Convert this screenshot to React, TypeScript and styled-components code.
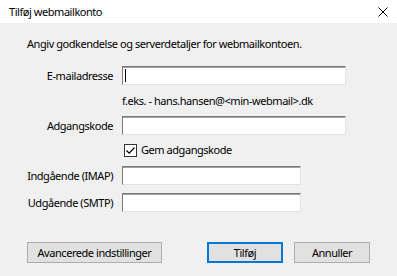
import React from "react";
import styled, { createGlobalStyle } from "styled-components";

const Global = createGlobalStyle`
  html, body { margin: 0; padding: 0; background: #f0f0f0; }
  * { box-sizing: border-box; }
`;

const FONT = `"Noto Sans", "Open Sans", sans-serif`;

const Window = styled.div`
  width: 397px;
  height: 276px;
  background: #f0f0f0;
  font-family: ${FONT};
  font-size: 11px;
  letter-spacing: -0.45px;
  color: #000;
  display: flex;
  flex-direction: column;
  overflow: hidden;
  white-space: nowrap;
`;

const TitleBar = styled.div`
  height: 23px;
  background: #fff;
  display: flex;
  align-items: center;
  justify-content: space-between;
  padding: 0 9px 0 9px;
`;

const CloseIcon = styled.svg`
  width: 10px;
  height: 10px;
`;

const Body = styled.div`
  padding: 13px 0 0 27px;
  display: flex;
  flex-direction: column;
`;

const Intro = styled.div`
  line-height: 16px;
  height: 16px;
`;

const Form = styled.div`
  margin-top: 14px;
  display: grid;
  grid-template-columns: 86px 224px;
  column-gap: 9px;
  align-items: center;
`;

const Label = styled.div`
  text-align: right;
  line-height: 16px;
`;

const Input = styled.div<{ $w: number; $mt: number }>`
  width: ${(p) => p.$w}px;
  height: 19px;
  margin-top: ${(p) => p.$mt}px;
  background: #fff;
  border: 1px solid;
  border-color: #7a7a7a #e3e3e3 #e3e3e3 #7a7a7a;
  box-shadow: inset 0 1px 0 #a0a0a0;
  display: flex;
  align-items: center;
  padding-left: 2px;
`;

const Caret = styled.div`
  width: 1px;
  height: 13px;
  background: #000;
`;

const Cell = styled.div<{ $mt: number }>`
  grid-column: 2;
  margin-top: ${(p) => p.$mt}px;
  line-height: 16px;
  display: flex;
  align-items: center;
`;

const LabelCell = styled(Label)<{ $mt: number }>`
  margin-top: ${(p) => p.$mt}px;
`;

const Check = styled.div`
  width: 13px;
  height: 13px;
  border: 1px solid #333;
  background: #fff;
  margin-left: 2px;
  margin-right: 4px;
  display: flex;
  align-items: center;
  justify-content: center;
`;

const Buttons = styled.div`
  margin-top: 30px;
  display: flex;
`;

const Button = styled.div<{ $w: number; $default?: boolean; $ml?: number }>`
  width: ${(p) => p.$w}px;
  height: 21px;
  margin-left: ${(p) => p.$ml ?? 0}px;
  background: #e1e1e1;
  border: 1px solid ${(p) => (p.$default ? "#0078d7" : "#adadad")};
  box-shadow: ${(p) => (p.$default ? "inset 0 0 0 1px #0078d7" : "none")};
  display: flex;
  align-items: center;
  justify-content: center;
`;

export default function App() {
  return (
    <>
      <Global />
      <Window>
        <TitleBar>
          <span>Tilføj webmailkonto</span>
          <CloseIcon viewBox="0 0 10 10">
            <path d="M0.5 0.5 L9.5 9.5 M9.5 0.5 L0.5 9.5" stroke="#000" strokeWidth="1" />
          </CloseIcon>
        </TitleBar>
        <Body>
          <Intro>Angiv godkendelse og serverdetaljer for webmailkontoen.</Intro>
          <Form>
            <Label>E-mailadresse</Label>
            <Input $w={224} $mt={0}>
              <Caret />
            </Input>
            <Cell $mt={8}>f.eks. - hans.hansen@&lt;min-webmail&gt;.dk</Cell>
            <LabelCell $mt={7}>Adgangskode</LabelCell>
            <Input $w={224} $mt={7} />
            <Cell $mt={7}>
              <Check>
                <svg width="11" height="11" viewBox="0 0 11 11">
                  <path d="M1.5 5.5 L4.2 8.2 L9.5 2.5" fill="none" stroke="#000" strokeWidth="1.2" />
                </svg>
              </Check>
              Gem adgangskode
            </Cell>
            <LabelCell $mt={8}>Indgående (IMAP)</LabelCell>
            <Input $w={179} $mt={8} />
            <LabelCell $mt={8}>Udgående (SMTP)</LabelCell>
            <Input $w={179} $mt={8} />
          </Form>
          <Buttons>
            <Button $w={135}>Avancerede indstillinger</Button>
            <Button $w={76} $default $ml={45}>Tilføj</Button>
            <Button $w={76} $ml={11}>Annuller</Button>
          </Buttons>
        </Body>
      </Window>
    </>
  );
}
